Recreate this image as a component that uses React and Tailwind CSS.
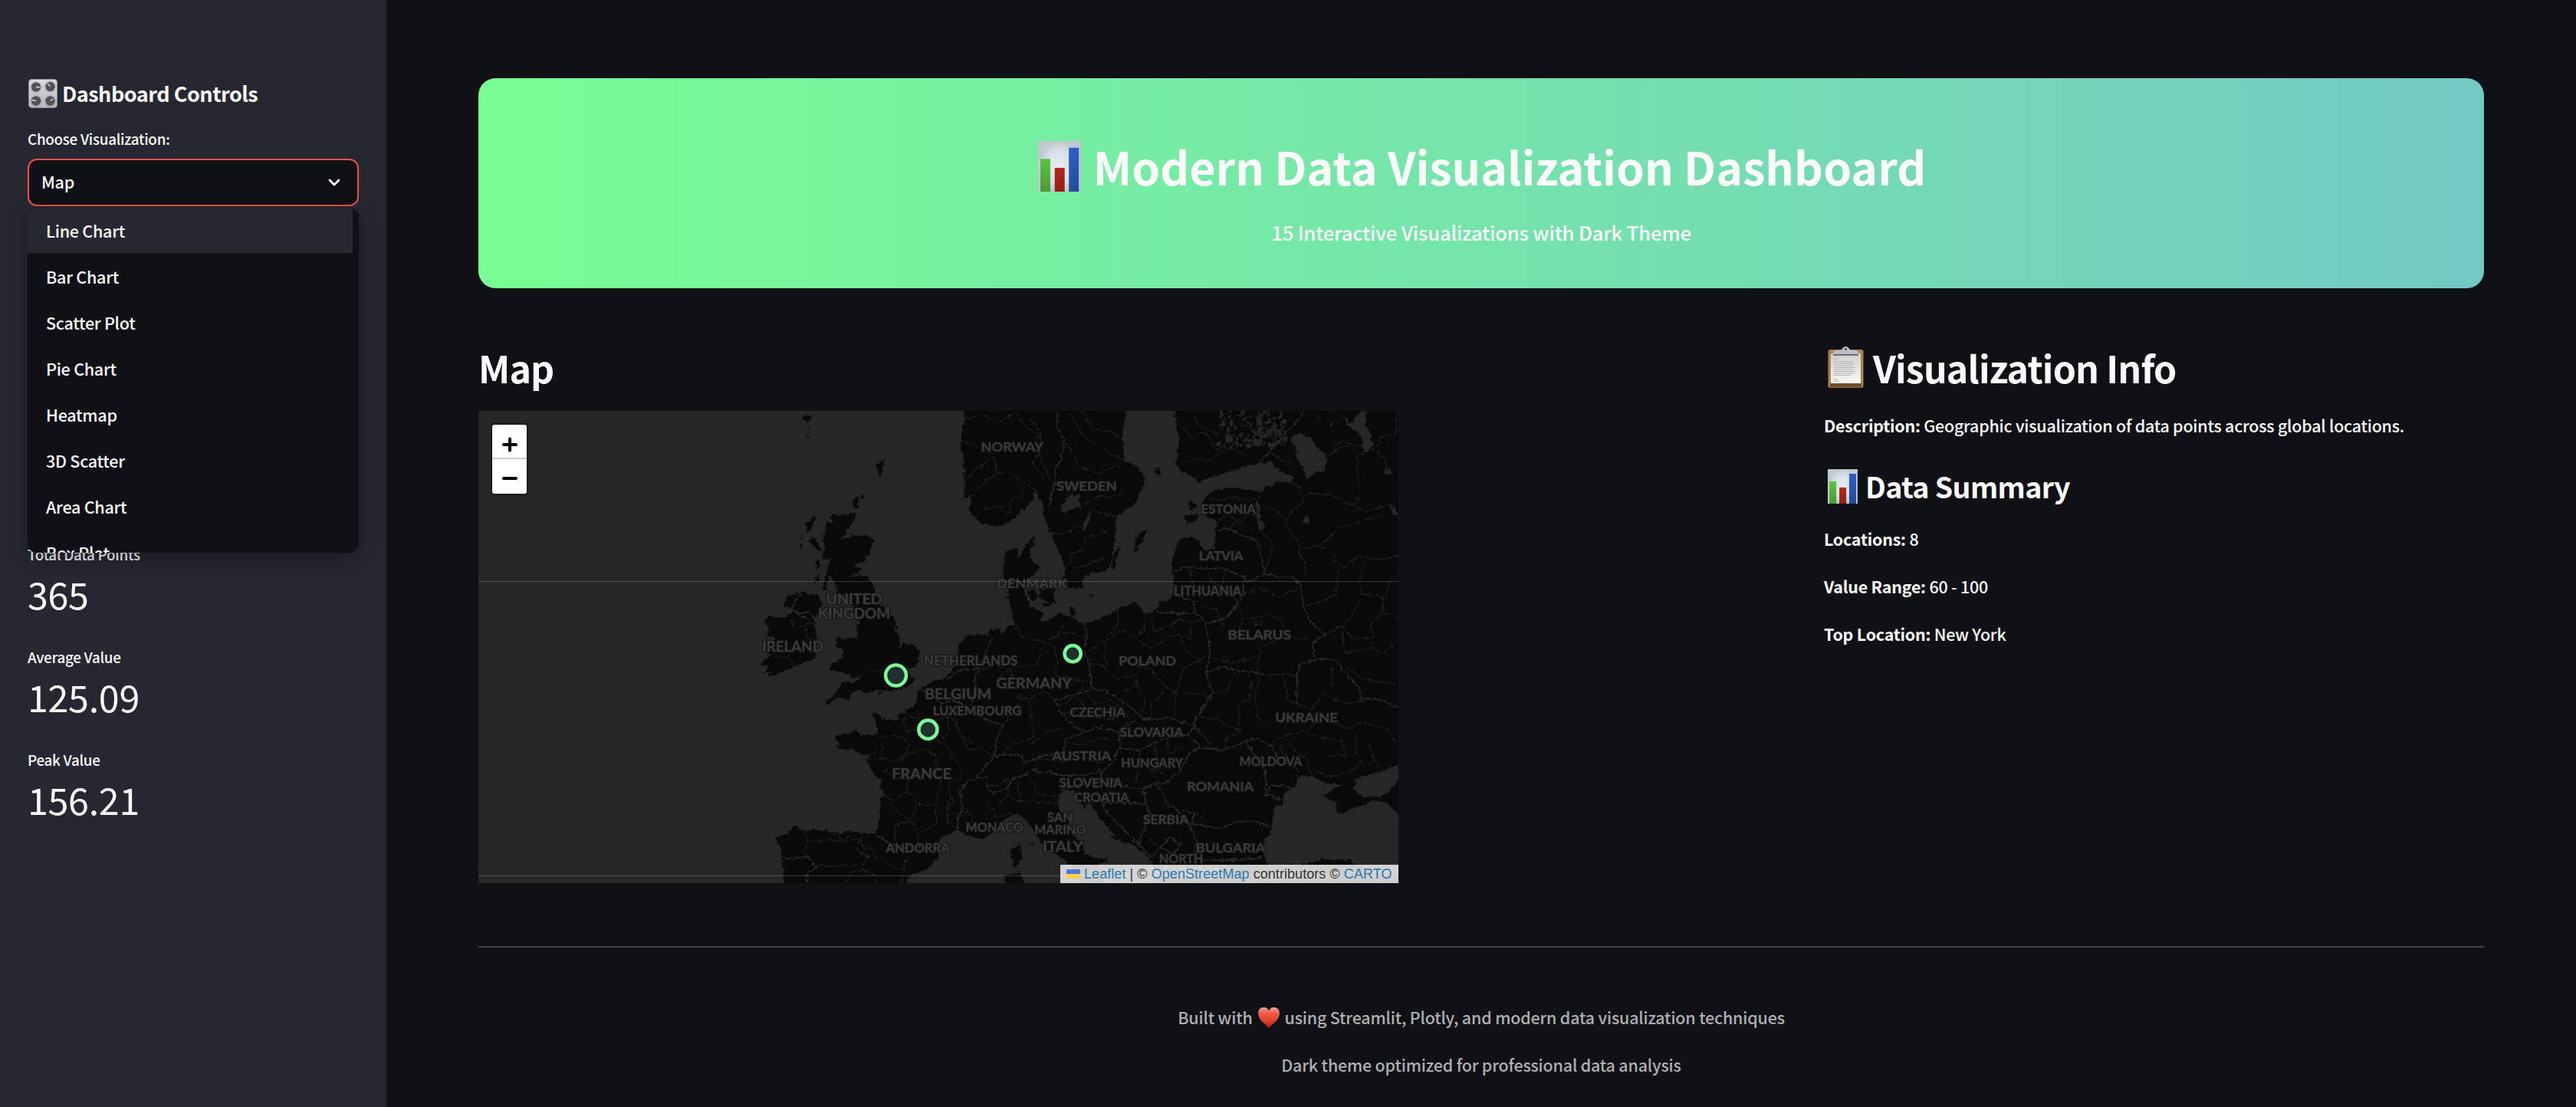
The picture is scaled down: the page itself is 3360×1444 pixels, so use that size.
import React from "react";

/* ---------- Map geometry (drawing units: 2.45 per pixel, east sheet offset by 1470) ---------- */
const EAST = 1470;
const parse = (s, dx = 0) =>
  s.trim().split(/\s+/).map((p) => {
    const [x, y] = p.split(",").map(Number);
    return `${x + dx},${y}`;
  });
const poly = (pts) => `M${pts.join("L")}Z`;
const west = (s) => poly(parse(s));
const east = (s) => poly(parse(s, EAST));

const CONTINENT = poly([
  ...parse(
    "963,1380 975,1372 1000,1368 1002,1355 1025,1343 1043,1355 1105,1352 1160,1365 1205,1358 1240,1365 1265,1366 1278,1364 1286,1348 1293,1300 1299,1240 1318,1252 1300,1232 1296,1192 1272,1176 1258,1142 1244,1130 1262,1120 1225,1108 1205,1098 1165,1095 1152,1085 1168,1080 1150,1066 1152,1052 1185,1047 1212,1035 1230,1050 1285,1050 1283,1010 1270,982 1292,983 1297,1000 1345,1005 1358,998 1352,985 1385,968 1410,955 1414,905 1440,893 1478,872 1500,868 1518,850 1530,822 1541,775 1545,765"
  ),
  ...parse(
    "100,732 145,728 172,735 175,712 205,710 215,730 232,702 250,697 246,660 240,635 228,610 240,590 225,570 218,545 220,490 228,462 262,452 265,490 280,455 318,410 316,440 300,465 310,498 332,508 325,530 302,545 290,570 285,600 300,625 300,640 345,660 335,690 370,680 395,660 425,668 470,695 500,688 560,665 582,645 640,628 652,640 665,660 690,660 712,640 715,620 740,622 760,600 762,560 755,520 758,480 778,430 820,412 842,435 858,462 893,460 895,400 898,365 868,352 860,330 852,310 866,285 890,270 950,258 1000,268 1050,272 1052,250 1070,262 1090,240 1130,240 1150,228 1105,210 1070,175 1000,190 920,215 840,240 818,222 790,210 768,190 775,150 778,100 768,40 768,10 1485,10 1485,1530 700,1530 692,1455 685,1445 640,1405 590,1385 550,1345 520,1310 502,1275 485,1268 475,1285 460,1260 445,1230 420,1225 393,1240 395,1290 425,1320 440,1370 470,1400 478,1430 515,1445 552,1447 545,1458 520,1462 545,1530 480,1530 430,1465 395,1435 350,1410 325,1370 305,1340 285,1315 250,1303 228,1318 200,1350 165,1375 130,1382 95,1368 70,1355 50,1365 20,1375 8,1395",
    EAST
  ),
  ...parse("1478,1395 1483,1440 1440,1480 1395,1497 1380,1510 1383,1530 985,1530 985,1490 978,1435 980,1412 965,1402"),
]);

const LAND = [
  CONTINENT,
  /* Great Britain */
  west(
    "1137,342 1165,350 1219,338 1216,358 1180,402 1187,405 1165,425 1205,413 1262,415 1272,430 1262,462 1238,500 1205,508 1235,518 1225,532 1190,545 1240,540 1262,555 1275,578 1283,598 1298,640 1338,675 1350,712 1332,700 1360,745 1350,772 1368,760 1400,762 1420,785 1412,822 1395,835 1375,845 1406,873 1395,885 1370,900 1320,908 1290,905 1255,915 1218,908 1200,920 1195,942 1165,932 1145,935 1128,957 1112,950 1150,920 1172,880 1215,883 1240,858 1205,866 1175,850 1148,848 1130,842 1132,828 1175,800 1178,780 1155,768 1155,735 1170,735 1175,748 1200,738 1222,740 1220,705 1228,680 1210,645 1200,635 1200,608 1155,600 1150,570 1143,548 1130,545 1118,588 1108,588 1118,540 1138,485 1108,490 1118,450 1108,415 1122,400 1122,372 1140,370"
  ),
  /* Ireland */
  west(
    "985,638 1000,605 1030,600 1045,592 1055,600 1095,600 1106,628 1105,650 1085,682 1085,705 1092,740 1083,808 1050,815 1035,828 1000,840 955,860 938,860 950,848 920,855 935,835 915,825 918,812 950,795 930,785 935,760 965,740 930,735 940,715 922,690 935,668 985,678 1012,655 1000,640"
  ),
  /* Scottish isles, Faroe, Shetland, Orkney, Channel Islands */
  west("1052,375 1085,350 1088,358 1078,385 1058,405 1060,390"),
  west("1065,432 1082,415 1092,435 1105,455 1100,465 1085,450"),
  west("1085,500 1095,490 1106,510 1090,518"),
  west("1078,568 1088,545 1105,535 1095,560"),
  west("1035,418 1048,416 1040,424"),
  west("1038,440 1043,440 1041,462"),
  west("1040,42 1055,30 1070,33 1075,28 1070,45 1060,55 1052,42"),
  west("1060,66 1070,68 1066,75"),
  west("1057,88 1067,102 1062,102"),
  west("1281,205 1285,180 1300,175 1312,158 1306,185 1300,200 1293,235 1290,210"),
  west("1206,315 1210,295 1222,290 1225,298 1218,310 1228,320 1215,325"),
  west("1228,283 1246,288 1236,295"),
  west("1255,1008 1263,1010 1262,1013"),
  west("1286,912 1300,912 1295,920"),
  /* Scandinavia */
  east(
    "92,10 95,48 85,68 82,90 86,110 80,130 88,150 92,200 92,290 112,292 108,335 122,352 150,375 190,385 225,375 255,352 290,320 298,312 310,305 318,262 330,300 345,312 348,350 370,410 392,460 415,512 410,550 428,582 470,582 475,545 500,535 545,530 560,500 570,460 575,390 580,350 640,312 655,270 668,250 665,215 640,188 625,185 602,175 600,135 595,100 605,50 610,10"
  ),
  /* Baltic and North Sea islands */
  east("640,472 638,430 650,405 682,390 665,425 650,445"),
  east("563,522 568,480 592,440 580,485 568,522"),
  east("695,208 712,195 722,210 712,220 702,212"),
  east("492,598 510,605 502,613"),
  east("795,350 845,345 838,362 805,378 800,362"),
  east("803,315 820,303 838,320 818,332"),
  east("330,590 360,575 385,580 375,600 385,625 370,632 350,620 335,608"),
  east("292,590 318,585 330,612 308,620"),
  east("340,630 368,630 362,642 345,638"),
  east("425,655 437,638 448,660 440,672"),
  east("72,765 92,742 100,740 80,768"),
  /* Corsica and Sardinia */
  east("238,1420 250,1408 266,1405 270,1388 276,1440 262,1475 248,1462"),
  east("220,1500 250,1492 270,1488 287,1530 225,1530"),
  east("300,1398 314,1395 312,1402"),
  /* Dalmatian islands */
  east("560,1370 590,1380 590,1385 565,1378"),
  east("575,1385 610,1390 600,1395"),
];

const WATER = [
  /* Black Sea, Azov */
  "1485,1308 1440,1268 1410,1258 1360,1275 1330,1285 1305,1303 1290,1300 1278,1265 1240,1245 1275,1222 1305,1208 1250,1205 1200,1180 1168,1180 1145,1220 1118,1235 1108,1275 1086,1275 1075,1335 1070,1365 1050,1390 1048,1430 1065,1468 1160,1468 1230,1450 1320,1448 1350,1470 1390,1490 1485,1500",
  "1485,1143 1440,1160 1400,1172 1345,1190 1335,1222 1360,1246 1420,1250 1440,1238 1470,1210 1485,1180",
  /* Ladoga, Onega, Peipus, Rybinsk and smaller lakes */
  "1135,100 1165,85 1200,100 1215,130 1245,150 1252,190 1240,210 1215,208 1190,235 1180,210 1155,165 1150,130",
  "1300,20 1325,55 1345,30 1362,15 1378,18 1375,60 1390,90 1400,125 1375,148 1362,120 1365,98 1335,75 1315,60",
  "1022,300 1040,312 1038,365 1055,385 1035,398 1028,360",
  "1170,368 1185,352 1200,365 1190,376",
  "1436,205 1450,196 1465,212 1442,220",
  "1450,310 1470,325 1478,350 1460,345",
  "1225,28 1235,40 1228,45",
  "1258,40 1270,60 1262,66",
  "400,330 415,305 425,285 460,280 462,320 430,332 412,345",
  "470,402 478,365 500,328 495,360 480,395",
].map(east);

/* Small lakes of the Finnish lake district */
const LAKES = Array.from({ length: 130 }, (_, i) => {
  const r = (k) => {
    const v = Math.sin(i * 12.9898 + k * 78.233) * 43758.5453;
    return v - Math.floor(v);
  };
  return { cx: EAST + 905 + r(1) * 215, cy: 16 + r(2) * 115, rx: 2 + r(3) * 6, ry: 2 + r(4) * 8 };
});

const line = (s, dx = EAST) => `M${parse(s, dx).join("L")}`;

/* National borders */
const NATIONAL = [
  "390,15 388,70 412,105 408,150 385,205 385,240 372,270 365,318",
  "1178,20 1130,75 1080,130 1035,178",
  "896,400 935,390 975,410 1030,430 1040,480 1052,535 1000,560 980,545 950,530 925,520 860,518 800,512 765,528",
  "1052,535 1100,545 1140,545 1168,575 1175,640 1200,690 1245,730 1205,755 1210,800",
  "985,560 985,600 950,655 925,680 865,693",
  "705,658 830,663 858,680 878,760 875,800 865,850 885,915 825,1010 830,1025 880,1080",
  "830,663 828,625 762,600",
  "865,850 920,832 960,845 1010,848 1060,860 1110,855 1155,862",
  "1155,950 1155,862 1165,825 1210,808 1275,808 1310,850 1355,900 1360,935 1410,935 1450,950 1475,965",
  "475,690 485,720 475,780 492,820 495,870 505,905 440,920 385,940 400,980 440,1020 480,1040",
  "505,905 545,910 600,945 640,975 665,1000 705,1000 740,995 825,1020",
  "480,1040 520,1025 585,1042 640,1000",
  "480,1040 415,1065 410,1110 350,1115 285,1140 275,1115 230,1112 190,1118",
  "190,1118 195,1065 215,1020 170,1005 135,985 100,960",
  "100,960 60,940 20,950 -10,925 -55,900",
  "135,985 110,965 130,920 125,870 138,840 180,740",
  "135,840 80,842 45,868 5,870",
  "190,1118 160,1150 130,1190 165,1185 165,1215 185,1240 235,1215 245,1190 280,1180 320,1160 350,1180",
  "130,1190 100,1200 80,1230 85,1280 70,1330 72,1355",
  "350,1165 400,1180 475,1180 530,1165 565,1140 590,1090 590,1050",
  "530,1165 530,1190 480,1205 400,1225",
  "590,1090 650,1100 690,1080 740,1060 805,1050",
  "805,1050 830,1025",
  "805,1050 850,1090 920,1100 990,1070 1030,1060 1070,1085 1095,1120",
  "990,1070 1020,1115 1055,1165 1055,1240 1110,1258",
  "1055,1240 1075,1210 1125,1215 1145,1225",
  "850,1090 810,1110 785,1160 745,1200 700,1205 665,1220 600,1215 560,1185",
  "700,1205 725,1230 740,1270 775,1290 790,1320 830,1335 905,1348 960,1330 1020,1325 1070,1345",
  "665,1220 670,1260 685,1300 665,1360 650,1400 690,1440",
  "535,1265 670,1270",
  "535,1265 540,1290 590,1340 650,1400",
  "790,1290 830,1300 815,1345 835,1390 825,1430 850,1450 960,1450 1045,1440",
  "720,1410 750,1378 785,1400 760,1430 720,1410",
  "-190,1370 -150,1395 -100,1410 -20,1400 8,1395",
  "-490,1440 -465,1448 -410,1440 -395,1450 -383,1475 -410,1495 -410,1524",
  "-450,658 -410,680 -382,680 -410,655 -430,660 -460,650 -450,625 -430,600",
].map((s) => line(s));

/* Regional borders */
const REGIONAL = [
  "92,40 150,30 205,48 255,20 285,60 330,90 325,140 345,190 370,235",
  "85,110 140,130 190,165 195,210 240,215 300,255 318,262",
  "92,240 150,185 190,165",
  "110,290 160,240 200,215",
  "150,330 205,320 235,345 240,300 290,280",
  "300,40 335,80 340,130 310,180 345,230",
  "430,20 470,90 530,135 600,170",
  "470,15 505,75 560,80 600,110",
  "412,110 440,150 455,190 520,215 560,200 600,180",
  "385,245 430,240 440,285",
  "500,330 545,345 578,350",
  "465,325 520,285 560,290 600,275",
  "430,470 470,460 480,420 520,410 560,390",
  "430,470 440,520 500,500 545,480",
  "370,410 430,400 460,380 475,400",
  "780,60 820,100 860,80 900,140 930,130 1000,160",
  "820,15 840,60 900,90 920,60",
  "800,180 840,165 880,175 930,135",
  "1050,15 1040,80 1090,110",
  "1060,140 1105,170 1155,190",
  "1250,165 1290,130 1330,125 1370,125",
  "1270,130 1290,115 1335,118",
  "1475,15 1470,90 1430,95 1410,130 1375,145",
  "1410,145 1440,170 1440,205",
  "1375,145 1350,160 1350,230 1358,260 1350,300 1325,315",
  "1052,320 1095,335 1120,370",
  "1130,240 1165,260 1195,230",
  "1120,370 1130,345 1170,310 1185,280 1230,280 1270,285 1325,315 1380,335 1430,320 1475,310",
  "1120,370 1130,400 1160,430 1160,460 1210,450 1250,430 1290,385 1330,380 1410,350 1435,355",
  "1040,400 1080,440 1055,530",
  "1160,460 1180,500 1185,550",
  "1225,445 1260,460 1300,520 1350,480 1410,490 1480,480",
  "1290,520 1280,600 1240,620 1180,640",
  "1360,620 1330,670 1300,700 1245,730",
  "1370,500 1355,560 1365,600 1440,610 1450,560 1480,540",
  "1430,610 1430,660 1480,670",
  "1300,700 1330,740 1400,740 1390,700 1430,660",
  "1300,720 1310,790 1390,770 1430,790 1480,750",
  "1310,830 1360,870 1480,890",
  "860,290 900,300 950,290 1000,300 1040,290",
  "900,370 930,345 980,370 1000,340 1030,355",
  "940,390 960,370 1020,395",
  "870,520 880,560 930,590 980,580",
  "815,520 820,570 870,600 830,625",
  "925,520 920,570 960,620 980,680 970,720",
  "985,600 1040,580 1100,610 1165,580",
  "850,640 900,650 920,700",
  "1020,685 1040,685 1040,700 1020,700 1020,685",
  "980,680 1060,670 1110,680 1110,740 1035,770 1030,850",
  "1110,740 1190,745",
  "875,800 950,820 1030,800",
  "580,645 585,700 545,740 540,800 550,830",
  "665,660 670,710 640,740 600,715 560,740 490,780",
  "640,740 690,775 750,735 780,730",
  "690,680 700,720 750,700 780,680 820,690 815,740 780,730 800,780 840,810",
  "820,690 860,680",
  "495,825 530,825 580,870 640,860 645,895 600,910",
  "640,830 690,840 730,890 770,920 790,840 865,800",
  "645,895 670,940 660,990",
  "730,890 720,930 690,950 690,990",
  "770,920 765,990",
  "790,915 850,920 885,930",
  "260,700 280,740 340,750 380,770 390,820 380,860 430,870 490,880",
  "280,740 250,700",
  "340,770 325,830 250,830 200,870",
  "370,740 430,720 475,740",
  "360,750 390,730 410,695",
  "140,840 200,830 240,840 245,870",
  "250,930 300,935 350,910 385,940",
  "215,1020 280,935 270,920",
  "300,940 315,1060 240,1080 215,1110",
  "300,1085 360,1040 400,1030",
  "400,960 430,940 470,900 510,950 560,940 590,960",
  "450,930 480,960 530,975 570,960",
  "410,980 450,975 480,990 560,1000 580,1000",
  "415,1075 480,1080 520,1060 585,1070",
  "285,1140 330,1125 410,1135 460,1120 530,1140",
  "600,960 620,1000 600,1040",
  "650,1100 655,1140 640,1200",
  "700,1080 710,1130 690,1160 710,1200",
  "740,1070 750,1110 790,1090",
  "655,1140 690,1160 760,1150",
  "885,920 930,910 955,850",
  "970,945 975,1040 930,1060 920,1100",
  "885,930 840,990 900,1000 975,1040",
  "1000,850 1010,900 1000,940 970,945",
  "1040,860 1020,930 1030,1000 1070,1020",
  "1110,860 1130,940 1160,960",
  "1155,950 1200,970 1240,920 1270,900 1265,830",
  "1240,920 1310,950 1370,940",
  "1200,970 1220,1010 1180,1040 1120,1050 1070,1080",
  "1260,1010 1320,1030 1360,1010 1440,1030 1475,1080",
  "1180,1045 1240,1060 1300,1070 1310,1115 1250,1120",
  "1340,1040 1350,1110 1310,1118",
  "1120,1060 1160,1110 1190,1130 1200,1180",
  "1210,1165 1270,1185 1340,1160 1360,1130",
  "1380,1060 1400,1120 1420,1160",
  "1060,1085 1100,1080 1130,1140 1160,1160 1160,1180",
  "165,1215 200,1210 230,1190 235,1245 260,1260 390,1270",
  "235,1245 200,1270 205,1310 240,1300",
  "260,1190 270,1250",
  "170,1270 195,1310 160,1320",
  "300,1180 330,1240 390,1245",
  "85,1280 120,1310 110,1350",
  "560,1190 555,1240 535,1265",
  "690,1160 730,1175",
  "680,1380 720,1410 690,1440",
  "830,1300 860,1320",
  "985,1450 1040,1445",
  "1080,1450 1110,1500",
  /* France, Iberia */
  "-185,1052 -170,1055 -170,1100 -225,1115",
  "-170,1055 -110,1055 -85,1080 -90,1105 -120,1130",
  "-225,1130 -160,1125 -120,1135 -80,1110 -40,1095 0,1115 5,1150",
  "-60,960 -50,1000 -85,990 -105,1000 -90,1040 -60,1030",
  "-50,1000 -10,1010 40,990 60,1000 85,1060 110,1100 140,1090 190,1118",
  "0,1060 40,1090 60,1130 80,1150 85,1200 50,1190",
  "40,990 40,1040 20,1070",
  "70,1000 70,1040 120,1080",
  "-150,1150 -160,1165 -130,1190 -90,1190 -90,1230 -130,1260 -165,1245",
  "-90,1230 -65,1250 -60,1290 -85,1320 -130,1290 -150,1250",
  "-60,1270 0,1275 20,1190",
  "0,1275 5,1330 -30,1355 -50,1360",
  "40,1195 50,1240 40,1280 65,1310 100,1300",
  "45,1250 60,1260 50,1280",
  "-130,1390 -130,1340 -80,1325 -60,1350 -50,1420",
  "40,1280 40,1330 70,1350",
  "-415,1355 -410,1390 -420,1430 -400,1440",
  "-410,1390 -340,1385 -300,1390 -270,1370",
  "-325,1365 -280,1395 -250,1380 -230,1410 -190,1415",
  "-250,1415 -210,1440 -180,1440 -130,1475 -105,1480 -90,1440",
  "-395,1465 -330,1470 -240,1465 -215,1450 -250,1415",
  "-285,1524 -270,1490 -230,1480 -190,1500 -190,1524",
  "-110,1524 -100,1480",
  "-240,1380 -220,1440",
  /* Ireland, Britain */
  "-455,710 -415,700 -410,740 -430,770",
  "-455,710 -460,670",
  "-415,700 -400,690 -385,700",
  "-410,740 -380,745",
  "-520,800 -470,805 -450,830",
  "-470,805 -460,770",
  "-225,850 -180,845 -170,860",
].map((s) => line(s));

/* [text, x start, x end, baseline, font size] */
const LABELS = [
  ["NORWAY", 146, 345, 144, 44],
  ["SWEDEN", 387, 580, 269, 44],
  ["ESTONIA", 849, 1024, 344, 40],
  ["LATVIA", 843, 983, 493, 40],
  ["DENMARK", 196, 421, 581, 44],
  ["LITHUANIA", 762, 978, 605, 41],
  ["BELARUS", 934, 1137, 746, 44],
  ["POLAND", 586, 769, 829, 44],
  ["NETHERLANDS", -37, 263, 827, 41],
  ["GERMANY", 194, 436, 901, 47],
  ["BELGIUM", -34, 179, 936, 46],
  ["LUXEMBOURG", -8, 275, 988, 40],
  ["CZECHIA", 430, 607, 993, 40],
  ["SLOVAKIA", 590, 792, 1056, 40],
  ["UKRAINE", 1086, 1286, 1010, 44],
  ["AUSTRIA", 373, 562, 1131, 44],
  ["HUNGARY", 593, 792, 1154, 40],
  ["MOLDOVA", 972, 1172, 1148, 40],
  ["SLOVENIA", 396, 597, 1218, 40],
  ["CROATIA", 443, 620, 1264, 40],
  ["ROMANIA", 804, 1017, 1229, 44],
  ["SERBIA", 664, 809, 1335, 40],
  ["SAN", 357, 439, 1328, 40],
  ["MARINO", 316, 482, 1367, 40],
  ["MONACO", 97, 281, 1360, 40],
  ["ITALY", 343, 472, 1423, 47],
  ["BULGARIA", 832, 1055, 1426, 44],
  ["NORTH", 715, 856, 1461, 40],
  ["MACEDONIA", 660, 912, 1500, 40],
  ["FRANCE", -139, 51, 1191, 47],
  ["ANDORRA", -158, 46, 1427, 40],
  ["UNITED", -349, -170, 631, 47],
  ["KINGDOM", -375, -144, 678, 47],
  ["IRELAND", -553, -358, 783, 46],
];

const MARKERS = [
  { name: "London", cx: 1344, cy: 860, r: 33 },
  { name: "Paris", cx: 1446.5, cy: 1033, r: 29.5 },
  { name: "Berlin", cx: 1909, cy: 790.5, r: 26 },
];

function EuropeMap() {
  return (
    <svg className="block h-[616px] w-[1200px]" viewBox="9.8 14.7 2940 1509.2" preserveAspectRatio="none">
      <defs>
        <filter id="coast" x="0" y="0" width="100%" height="100%" colorInterpolationFilters="sRGB">
          <feTurbulence type="fractalNoise" baseFrequency="0.08" numOctaves="3" seed="4" result="n" />
          <feDisplacementMap in="SourceGraphic" in2="n" scale="18" xChannelSelector="R" yChannelSelector="G" />
        </filter>
      </defs>
      <rect x="0" y="0" width="2960" height="1540" fill="#262626" />
      <g filter="url(#coast)">
        {LAND.map((d, i) => (
          <path key={i} d={d} fill="#090909" />
        ))}
        <g fill="none" stroke="#222222" strokeWidth="2.9" strokeLinejoin="round">
          {REGIONAL.map((d, i) => (
            <path key={i} d={d} />
          ))}
        </g>
        <g fill="none" stroke="#2b2b2b" strokeWidth="4" strokeLinejoin="round">
          {NATIONAL.map((d, i) => (
            <path key={i} d={d} />
          ))}
        </g>
        <g fill="#262626">
          {WATER.map((d, i) => (
            <path key={i} d={d} />
          ))}
          {LAKES.map((l, i) => (
            <ellipse key={i} {...l} />
          ))}
        </g>
      </g>
      <g
        fontFamily="Lato, 'Open Sans', sans-serif"
        fontWeight="700"
        fill="#3b3b3b"
        stroke="#141414"
        strokeOpacity="0.75"
        strokeWidth="7"
        strokeLinejoin="round"
        paintOrder="stroke"
      >
        {LABELS.map(([t, x1, x2, y, s]) => (
          <text key={t} x={x1 + EAST} y={y} fontSize={s} textLength={x2 - x1} lengthAdjust="spacingAndGlyphs">
            {t}
          </text>
        ))}
      </g>
      <g fill="#ffffff" fillOpacity="0.2">
        <rect x="0" y="558.5" width="2960" height="2.6" />
        <rect x="0" y="1499" width="2960" height="2.6" />
      </g>
      <g fill="#1f2f2e" stroke="#78ff94" strokeWidth="11">
        {MARKERS.map((m) => (
          <circle key={m.name} cx={m.cx} cy={m.cy} r={m.r} />
        ))}
      </g>
    </svg>
  );
}

/* ---------- Emoji-style icons ---------- */
function BarChartIcon({ className }) {
  return (
    <svg className={className} viewBox="0 0 56 66" preserveAspectRatio="none">
      <defs>
        <radialGradient id="sheet">
          <stop offset="0" stopColor="#f4f7fb" />
          <stop offset="0.6" stopColor="#e3e8ee" />
          <stop offset="1" stopColor="#c6ccd0" />
        </radialGradient>
        <linearGradient id="green" x1="0" y1="0" x2="0" y2="1">
          <stop offset="0" stopColor="#5cc343" />
          <stop offset="1" stopColor="#4a9c33" />
        </linearGradient>
        <linearGradient id="red" x1="0" y1="0" x2="0" y2="1">
          <stop offset="0" stopColor="#b5281c" />
          <stop offset="1" stopColor="#961c13" />
        </linearGradient>
        <linearGradient id="blue" x1="0" y1="0" x2="0" y2="1">
          <stop offset="0" stopColor="#2a60cb" />
          <stop offset="1" stopColor="#214b9c" />
        </linearGradient>
        <pattern id="grid" width="2.8" height="2.8" patternUnits="userSpaceOnUse">
          <path d="M0 0H2.8M0 0V2.8" stroke="#9fb9d2" strokeOpacity="0.55" strokeWidth="0.8" />
        </pattern>
      </defs>
      <rect width="56" height="66" fill="url(#sheet)" />
      <rect width="56" height="66" fill="url(#grid)" />
      <rect x="0.5" y="0.5" width="55" height="65" fill="none" stroke="#bcc1c4" strokeWidth="1" />
      <rect x="3" y="23.2" width="13" height="42.800" fill="url(#green)" />
      <rect x="21.7" y="35" width="13" height="31" fill="url(#red)" />
      <rect x="40.2" y="8.7" width="13" height="57.300" fill="url(#blue)" />
    </svg>
  );
}

function ClipboardIcon({ className }) {
  return (
    <svg className={className} viewBox="0 0 47 54">
      <defs>
        <linearGradient id="paper" x1="0" y1="0" x2="0" y2="1">
          <stop offset="0" stopColor="#cfcfcf" />
          <stop offset="1" stopColor="#f7f7f7" />
        </linearGradient>
      </defs>
      <rect x="0.5" y="4" width="46" height="50" rx="3" fill="#a98349" />
      <rect x="3" y="48" width="41" height="5.5" fill="#6e5128" />
      <rect x="4" y="9" width="39" height="39" fill="url(#paper)" />
      <path d="M7 10V7.5Q7 5.5 11 5L18 4.5Q20 0 23.500 0Q27 0 29 4.500L36 5Q40 5.500 40 7.500V10Z" fill="#b9bfc8" />
      <circle cx="23.5" cy="3.4" r="1.3" fill="#33363d" />
      <rect x="7" y="10" width="33" height="1.8" fill="#6a625c" />
      <path
        d="M7.500 16H13M7.500 20H34M7.500 22.500H35M7.500 25H33M7.500 27.500H37M7.500 30H34M7.500 32.500H36M7.500 35H34M7.500 37.500H30M7.500 42.500H13M7.500 45H16"
        stroke="#b3b3b3"
        strokeWidth="1"
      />
    </svg>
  );
}

function KnobsIcon({ className }) {
  const knobs = [
    [10, 10.5, 5.5, 0.2],
    [28.5, 10, -3.5, -4],
    [10, 28.5, -5.5, -0.8],
    [28.5, 28.5, 4.5, -2.5],
  ];
  return (
    <svg className={className} viewBox="0 0 38 38">
      <defs>
        <linearGradient id="panel" x1="0" y1="0" x2="0" y2="1">
          <stop offset="0" stopColor="#dcdedf" />
          <stop offset="1" stopColor="#b4b7ba" />
        </linearGradient>
      </defs>
      <rect x="0.5" y="0.5" width="37" height="37" rx="4" fill="url(#panel)" stroke="#8e9194" strokeWidth="1" />
      {knobs.map(([x, y, dx, dy]) => (
        <g key={`${x}-${y}`}>
          <circle cx={x} cy={y} r="7.6" fill="none" stroke="#85898c" strokeWidth="0.9" strokeDasharray="1 1.6" />
          <circle cx={x} cy={y} r="6.3" fill="#505457" />
          <path d={`M${x} ${y}l${dx} ${dy}`} stroke="#d5d8da" strokeWidth="1.4" />
        </g>
      ))}
    </svg>
  );
}

function HeartIcon({ className }) {
  return (
    <svg className={className} viewBox="0 0 28 27" preserveAspectRatio="none">
      <defs>
        <linearGradient id="heart" x1="0" y1="0" x2="0" y2="1">
          <stop offset="0" stopColor="#f7a49a" />
          <stop offset="0.3" stopColor="#ee5a48" />
          <stop offset="0.65" stopColor="#e2432f" />
          <stop offset="1" stopColor="#a81f12" />
        </linearGradient>
      </defs>
      <path
        d="M14 27C10 22 0 16.500 0 8C0 3.200 3.200 0 7.200 0C10.500 0 13 2 14 4.800C15 2 17.500 0 20.800 0C24.800 0 28 3.200 28 8C28 16.500 18 22 14 27Z"
        fill="url(#heart)"
      />
    </svg>
  );
}

/* ---------- Sidebar ---------- */
const OPTIONS = ["Line Chart", "Bar Chart", "Scatter Plot", "Pie Chart", "Heatmap", "3D Scatter", "Area Chart", "Box Plot"];
const METRICS = [
  ["Total Data Points", "365"],
  ["Average Value", "125.09"],
  ["Peak Value", "156.21"],
];

function Sidebar() {
  return (
    <aside className="h-full w-[504px] shrink-0 bg-[#262730] px-9 pt-[103px]">
      <h2 className="flex h-9 items-center text-[27px] leading-9 font-bold tracking-[-0.5px]">
        <KnobsIcon className="mt-0.5 mr-[6px] ml-px h-[38px] w-[38px]" />
        <span className="mt-0.5">Dashboard Controls</span>
      </h2>
      <label className="mt-[27px] block h-[30px] text-[18.8px] leading-[30px] font-medium tracking-[-0.25px]">
        Choose Visualization:
      </label>
      <div className="relative mt-[11px]">
        <div className="flex h-[62px] items-center justify-between rounded-xl border-2 border-[#f0504c] bg-[#0f1116] pr-[22px] pl-4 text-[21.5px] font-medium tracking-[-0.25px]">
          <span className="-mt-0.5">Map</span>
          <svg className="h-[10px] w-[16px]" viewBox="0 0 16 10" fill="none" stroke="#fafafa" strokeWidth="2.8" strokeLinecap="round" strokeLinejoin="round">
            <path d="M2 2L8 8L14 2" />
          </svg>
        </div>
        <ul className="absolute top-16 left-0 z-10 h-[450px] w-full overflow-hidden rounded-xl bg-[#0f1116] tracking-[-0.25px] shadow-[0_6px_24px_rgba(0,0,0,0.35)]">
          {OPTIONS.map((o, i) => (
            <li
              key={o}
              className={
                i === 0
                  ? "mr-2 h-[60px] border-b border-[#0f1116] bg-[#262730] pl-6 text-[21.5px] leading-[59px] font-medium"
                  : "mr-2 h-[60px] pl-6 text-[21.5px] leading-[59px] font-medium"
              }
            >
              {o}
            </li>
          ))}
        </ul>
      </div>
      <div className="mt-[439px] flex flex-col gap-[34px]">
        {METRICS.map(([k, v]) => (
          <div key={k} className="flex flex-col gap-1">
            <div className="h-[30px] text-[18.8px] leading-[30px] font-medium tracking-[-0.25px]">{k}</div>
            <div className="h-[66px] text-[48.4px] leading-[65px] tracking-[-0.3px]">{v}</div>
          </div>
        ))}
      </div>
    </aside>
  );
}

function MapPanel() {
  return (
    <div className="relative mt-[27px] h-[616px] w-[1200px] overflow-hidden">
      <EuropeMap />
      <div className="absolute top-[18px] left-[18px] flex h-[90px] w-[45px] flex-col rounded-[3px] bg-white shadow-[0_0_0_2px_rgba(0,0,0,0.3)]">
        <button className="flex h-[45px] items-center justify-center border-b-2 border-[#ccc]">
          <svg className="mt-2 h-5 w-5" viewBox="0 0 20 20" stroke="#000" strokeWidth="4" strokeLinecap="round">
            <path d="M2 10H18M10 2.500V17.500" />
          </svg>
        </button>
        <button className="flex h-[45px] items-center justify-center">
          <svg className="h-5 w-5" viewBox="0 0 20 20" stroke="#000" strokeWidth="4" strokeLinecap="round">
            <path d="M2 12H18" />
          </svg>
        </button>
      </div>
      <div className="absolute right-0 bottom-0 flex h-6 w-[441px] items-center bg-white/80 pl-2 font-['Liberation_Sans',sans-serif] text-[18px] leading-6 tracking-[0.06px] whitespace-pre text-[#333]">
        <svg className="mr-[5px] h-3 w-[18px]" viewBox="0 0 18 12">
          <rect width="18" height="6" fill="#5577dc" />
          <rect y="6" width="18" height="6" fill="#f5d44c" />
        </svg>
        <a className="text-[#2b79ac]">Leaflet</a>
        {" | © "}
        <a className="text-[#2b79ac]">OpenStreetMap</a>
        {" contributors © "}
        <a className="text-[#2b79ac]">CARTO</a>
      </div>
    </div>
  );
}

const SUMMARY = [
  ["Locations:", "8"],
  ["Value Range:", "60 - 100"],
  ["Top Location:", "New York"],
];

export default function App() {
  return (
    <div className="flex h-[1444px] w-[3360px] overflow-hidden bg-[#0f1116] font-['Noto_Sans_CJK_SC',sans-serif] text-[#fafafa]">
      <Sidebar />
      <main className="flex-1 px-[120px] pt-[102px]">
        <header className="flex h-[274px] flex-col items-center rounded-[22.5px] bg-[linear-gradient(90deg,#78fe93,#72cac4)] pt-[74px]">
          <h1 className="flex h-20 items-center text-[59.2px] leading-[80px] font-bold tracking-[-0.1px]">
            <BarChartIcon className="mt-0.5 mr-[16px] ml-0.5 h-[66px] w-[56px]" />
            Modern Data Visualization Dashboard
          </h1>
          <p className="mt-[27px] h-10 text-[25.8px] leading-10 font-medium tracking-[-0.25px]">
            15 Interactive Visualizations with Dark Theme
          </p>
        </header>

        <div className="mt-[73px] flex justify-between">
          <section>
            <h2 className="h-[60px] text-[48.4px] leading-[60px] font-bold tracking-[-0.9px]">Map</h2>
            <MapPanel />
          </section>
          <section className="w-[861px]">
            <h2 className="flex h-[60px] items-center text-[48.4px] leading-[60px] font-bold tracking-[-0.9px]">
              <ClipboardIcon className="mr-[12px] ml-[5px] h-[54px] w-[47px]" />
              Visualization Info
            </h2>
            <p className="mt-7 h-9 text-[21.5px] leading-9 font-medium tracking-[-0.26px]">
              <strong className="font-bold">Description:</strong> Geographic visualization of data points across global locations.
            </p>
            <h3 className="mt-9 flex h-[50px] items-center text-[37.7px] leading-[50px] font-bold tracking-[-0.7px]">
              <BarChartIcon className="mr-[10px] ml-[5px] h-[45px] w-[39px]" />
              Data Summary
            </h3>
            <div className="mt-[26px] flex flex-col gap-[26px] text-[21.5px] leading-9 font-medium tracking-[-0.26px]">
              {SUMMARY.map(([k, v]) => (
                <p key={k} className="h-9">
                  <strong className="font-bold">{k}</strong> {v}
                </p>
              ))}
            </div>
          </section>
        </div>

        <hr className="mt-[82px] h-0.5 border-0 bg-[#3e4047]" />
        <footer className="mt-[73px] flex flex-col items-center gap-[26px] text-[21.5px] leading-9 font-medium tracking-[-0.22px] text-[#aeafb0]">
          <p className="flex h-9 items-center">
            Built with
            <HeartIcon className="mr-[7px] ml-[7px] h-[27px] w-[28px]" />
            using Streamlit, Plotly, and modern data visualization techniques
          </p>
          <p className="h-9">Dark theme optimized for professional data analysis</p>
        </footer>
      </main>
    </div>
  );
}
